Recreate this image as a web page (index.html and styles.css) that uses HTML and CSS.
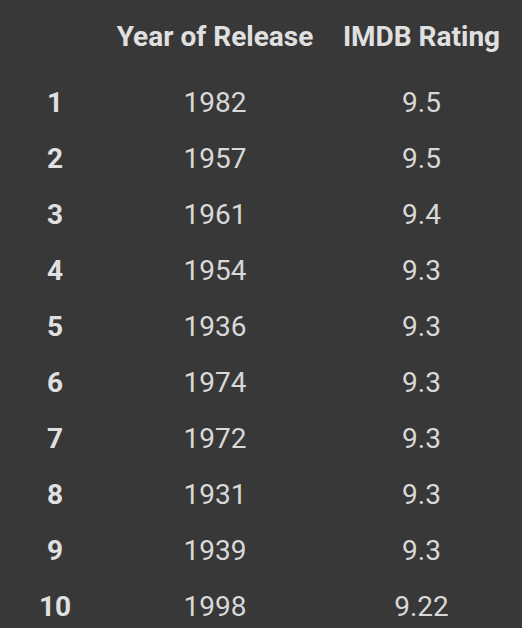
FILE: index.html
```html
<!DOCTYPE html>
<html>
<head>
<meta charset="utf-8">
<link rel="stylesheet" href="styles.css">
</head>
<body>
<table class="df">
  <colgroup><col class="c-idx"><col class="c-year"><col class="c-rate"></colgroup>
  <thead>
    <tr><th></th><th>Year of Release</th><th>IMDB Rating</th></tr>
  </thead>
  <tbody>
    <tr><th>1</th><td>1982</td><td>9.5</td></tr>
    <tr><th>2</th><td>1957</td><td>9.5</td></tr>
    <tr><th>3</th><td>1961</td><td>9.4</td></tr>
    <tr><th>4</th><td>1954</td><td>9.3</td></tr>
    <tr><th>5</th><td>1936</td><td>9.3</td></tr>
    <tr><th>6</th><td>1974</td><td>9.3</td></tr>
    <tr><th>7</th><td>1972</td><td>9.3</td></tr>
    <tr><th>8</th><td>1931</td><td>9.3</td></tr>
    <tr><th>9</th><td>1939</td><td>9.3</td></tr>
    <tr><th>10</th><td>1998</td><td>9.22</td></tr>
  </tbody>
</table>
</body>
</html>
```
FILE: styles.css
```css
html, body {
  margin: 0;
  padding: 0;
  background: #383838;
}
body {
  font-family: Roboto, "Liberation Sans", sans-serif;
  font-size: 28px;
  color: #d8d8d8;
}
.df {
  margin-left: 8px;
  border-collapse: collapse;
  table-layout: fixed;
  width: 507px;
}
.c-idx { width: 94px; }
.c-year { width: 226px; }
.c-rate { width: 187px; }
.df th, .df td {
  padding: 14px 0;
  line-height: 28px;
  text-align: center;
  white-space: nowrap;
}
.df thead th {
  padding: 23px 0 24px;
  font-weight: 700;
  color: #e0e0e0;
}
.df tbody th {
  font-weight: 700;
  color: #e0e0e0;
}
.df td {
  font-weight: 400;
}
```
